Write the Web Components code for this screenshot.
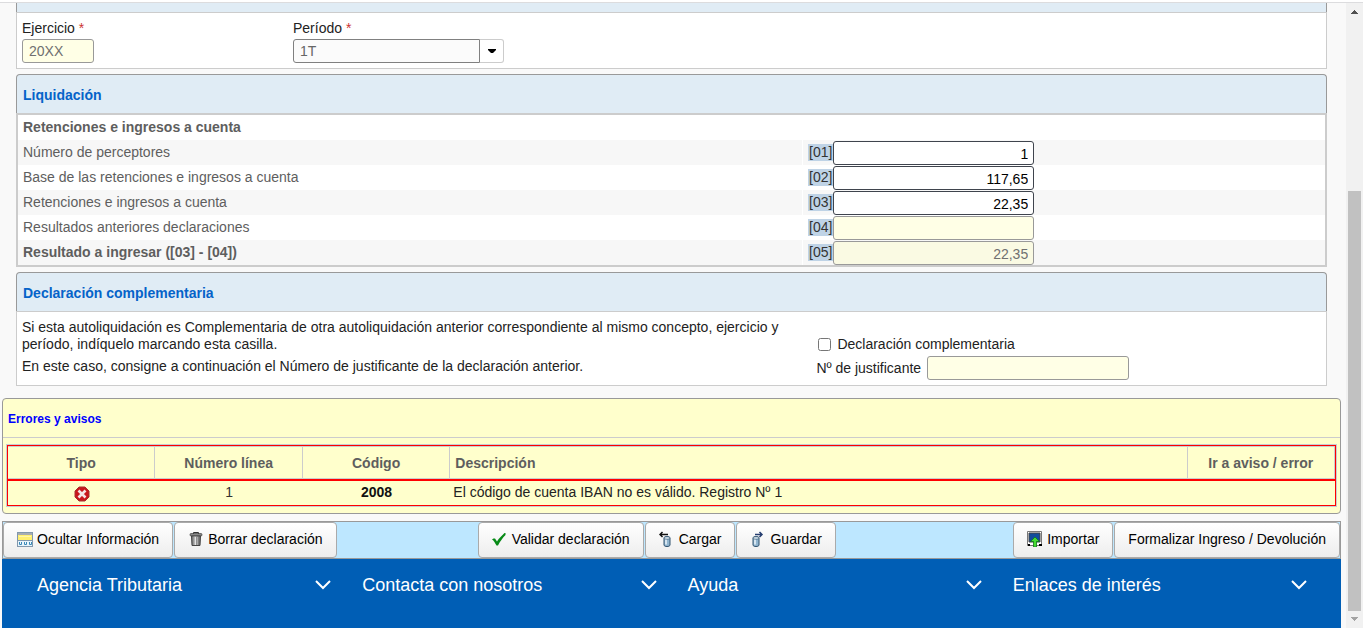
<!DOCTYPE html>
<html lang="es">
<head>
<meta charset="utf-8">
<title>Autoliquidación</title>
<style>
  body { margin: 0; font: 14px/17px "Liberation Sans", Arial, sans-serif; color: #222; }
</style>
</head>
<body>
<app-window></app-window>

<template id="tpl-app-window">
  <style>
    :host { display: flex; flex-direction: column; min-height: 100vh; box-sizing: border-box; padding-top: 2px; background: #fff; }
    .view { flex: 1; display: flex; border-top: 1px solid #dcdcde; }
    main { flex: 1; min-width: 0; display: flex; flex-direction: column; padding: 0 5px 0 2px; background: #f9f9f9; }
    .sections { display: flex; flex-direction: column; gap: 5px; padding: 0 14px; }
    .period { display: flex; gap: 199px; padding: 7px 5px 5px; }
    error-list { margin: 12px 0 7px; }
    site-footer { flex: 1; }
  </style>
  <div class="view">
    <main>
      <div class="sections">
        <form-panel clipped>
          <div class="period">
            <year-field></year-field>
            <period-field></period-field>
          </div>
        </form-panel>
        <form-panel heading="Liquidación" flush><settlement-table></settlement-table></form-panel>
        <form-panel heading="Declaración complementaria"><supplementary-form></supplementary-form></form-panel>
      </div>
      <error-list></error-list>
      <action-bar></action-bar>
      <site-footer></site-footer>
    </main>
    <scroll-rail></scroll-rail>
  </div>
</template>

<template id="tpl-form-panel">
  <style>
    :host { display: block; }
    header { box-sizing: border-box; height: 39px; padding: 12px 6px 0; border: 1px solid #999; border-bottom: 0; border-radius: 4px 4px 0 0; background: #e0ecf5; }
    h2 { margin: 0; font-size: 14px; line-height: 17px; color: #0563c9; }
    .body { border: 1px solid #ccc; background: #fff; }
    :host([clipped]) header { height: 9px; padding: 0; border-top: 0; border-radius: 0; }
    :host([flush]) .body { border-width: 2px; }
  </style>
  <header><h2></h2></header>
  <div class="body"><slot></slot></div>
</template>

<template id="tpl-year-field">
  <style>
    :host { display: block; }
    label { display: block; padding-bottom: 2px; }
    i { font-style: normal; color: #c33; }
    input { display: block; box-sizing: border-box; width: 72px; height: 24px; padding: 0 6px; border: 1px solid #999; border-radius: 3px; background: #ffffe6; color: #707070; font: inherit; }
  </style>
  <label for="year">Ejercicio <i>*</i></label>
  <input id="year" type="text" value="20XX" readonly>
</template>

<template id="tpl-period-field">
  <style>
    :host { display: block; }
    label { display: block; padding-bottom: 2px; }
    i { font-style: normal; color: #c33; }
    div { display: flex; }
    select { appearance: none; box-sizing: border-box; width: 187px; height: 24px; margin: 0; padding: 0 6px; border: 1px solid #808080; border-radius: 3px 0 0 3px; background: #fbfbfb; color: #666; font: inherit; }
    button { display: grid; place-items: center; box-sizing: border-box; width: 24px; height: 24px; padding: 0; border: 1px solid #ccc; border-left: 0; border-radius: 0 3px 3px 0; background: #fff; }
  </style>
  <label for="period">Período <i>*</i></label>
  <div>
    <select id="period"><option>1T</option></select>
    <button type="button" aria-label="Abrir"><svg width="8" height="5" viewBox="0 0 8 5"><path d="M0 0h8v1L5 4H3L0 1z" fill="#000"/></svg></button>
  </div>
</template>

<template id="tpl-settlement-table">
  <style>
    :host { display: block; color: #5e5e5e; }
    table { width: 100%; border-spacing: 0; table-layout: fixed; }
    .concept { width: 60%; }
    th, td { height: 25px; padding: 0 5px; text-align: left; font-weight: normal; }
    td { border-left: 1px solid #fff; }
    thead th, .total th { font-weight: bold; }
    tbody tr:nth-child(odd) { background: #f7f7f7; }
    td div { display: flex; align-items: center; }
    label { background: #bfd3e6; color: #333; width: 25px; text-align: center; }
    input { box-sizing: border-box; width: 201px; height: 24px; padding: 2px 5px 0; border: 1px solid #3f444d; border-radius: 3px; background: #fff; color: #000; font: inherit; text-align: right; }
    input:read-only { border-color: #999; background: #ffffe6; color: #707070; }
    .total input { background: #fafae3; }
  </style>
  <table>
    <colgroup><col class="concept"><col></colgroup>
    <thead><tr><th colspan="2">Retenciones e ingresos a cuenta</th></tr></thead>
    <tbody>
      <tr><th>Número de perceptores</th><td><div><label for="c1">[01]</label><input id="c1" value="1"></div></td></tr>
      <tr><th>Base de las retenciones e ingresos a cuenta</th><td><div><label for="c2">[02]</label><input id="c2" value="117,65"></div></td></tr>
      <tr><th>Retenciones e ingresos a cuenta</th><td><div><label for="c3">[03]</label><input id="c3" value="22,35"></div></td></tr>
      <tr><th>Resultados anteriores declaraciones</th><td><div><label for="c4">[04]</label><input id="c4" readonly></div></td></tr>
      <tr class="total"><th>Resultado a ingresar ([03] - [04])</th><td><div><label for="c5">[05]</label><input id="c5" value="22,35" readonly></div></td></tr>
    </tbody>
  </table>
</template>

<template id="tpl-supplementary-form">
  <style>
    :host { display: grid; grid-template-columns: 60% 1fr; padding: 7px 5px 5px; }
    p { margin: 0 0 5px; }
    .fields { padding: 17px 15px 0; }
    .line { display: flex; align-items: center; gap: 6px; }
    .line + .line { padding-top: 3px; }
    input[type=checkbox] { width: 13px; height: 13px; margin: 0 0 0 2px; }
    input[type=text] { box-sizing: border-box; width: 202px; height: 24px; border: 1px solid #999; border-radius: 3px; background: #ffffe6; font: inherit; }
  </style>
  <div>
    <p>Si esta autoliquidación es Complementaria de otra autoliquidación anterior correspondiente al mismo concepto, ejercicio y período, indíquelo marcando esta casilla.</p>
    <p>En este caso, consigne a continuación el Número de justificante de la declaración anterior.</p>
  </div>
  <div class="fields">
    <div class="line"><input id="extra" type="checkbox"><label for="extra">Declaración complementaria</label></div>
    <div class="line"><label for="receipt">Nº de justificante</label><input id="receipt" type="text" readonly></div>
  </div>
</template>

<template id="tpl-error-list">
  <style>
    :host { display: block; border: 1px solid #999; border-radius: 4px; background: #ffffcc; }
    h2 { margin: 0; padding: 12px 5px 9px; border-bottom: 1px solid #ccc; font-size: 12px; line-height: 17px; color: #00f; }
    .frame { margin: 6px 3px; border: 1px solid #c8ccd0; }
    table { width: 100%; border: 1px solid #f00; border-spacing: 0; table-layout: fixed; }
    th { box-sizing: border-box; width: calc(100% / 9); height: 33px; padding: 2px 5px 0; border: 1px solid #ccc; border-left: 0; color: #5e5e5e; }
    th:nth-child(4) { width: auto; text-align: left; }
    td { box-sizing: border-box; height: 26px; padding: 0 3px 2px; border-top: 2px solid #f00; text-align: center; }
    td:nth-child(3) { font-weight: bold; color: #111; }
    td:nth-child(4) { text-align: left; }
    td:nth-child(2) { color: #333; }
    svg { display: block; margin: 3px auto 0; }
  </style>
  <h2>Errores y avisos</h2>
  <div class="frame">
    <table>
      <thead><tr><th>Tipo</th><th>Número línea</th><th>Código</th><th>Descripción</th><th>Ir a aviso / error</th></tr></thead>
      <tbody><tr>
        <td><svg width="16" height="16" viewBox="0 0 16 16" role="img" aria-label="Error"><path d="M5 1h6l4 4v6l-4 4H5l-4-4V5z" fill="#c8171c" stroke="#a83030" stroke-width="1" stroke-linejoin="round"/><path d="M4.500 4.500l7 7M11.500 4.500l-7 7" stroke="#f4e6e6" stroke-width="2.600"/></svg></td>
        <td>1</td><td>2008</td><td>El código de cuenta IBAN no es válido. Registro Nº 1</td><td></td>
      </tr></tbody>
    </table>
  </div>
</template>

<template id="tpl-tool-button">
  <style>
    :host { display: block; }
    button { display: flex; align-items: center; gap: 4px; box-sizing: border-box; height: 36px; margin: 0; padding: 0 13px 2px; border: 1px solid #aaa; border-radius: 4px; background: linear-gradient(#fff, #ededed); color: #000; font: inherit; white-space: nowrap; }
    ::slotted(svg) { display: block; flex: none; }
  </style>
  <button type="button"><slot name="icon"></slot><slot></slot></button>
</template>

<template id="tpl-action-bar">
  <style>
    :host { display: grid; grid-template-columns: 71fr 80fr 49fr; border: 1px solid #999; background: #bde7ff; }
    div { display: flex; gap: 1px; }
    .end { justify-content: flex-end; }
  </style>
  <div>
    <tool-button><svg slot="icon" width="16" height="16" viewBox="0 0 16 16"><path d="M0 1h16v15H0z" fill="#8298ad"/><path d="M1 2h14v2H1z" fill="#a7adb2"/><path d="M1 4h14v5H1z" fill="#ffef70"/><path d="M2 5h12v1H2z" fill="#fff7a8"/><path d="M1 10h14v5H1z" fill="#e8f4fc"/><path d="M2.500 11v2.500h2V11M7.500 11v2.500h2V11M12.500 11v2.500h2V11" fill="none" stroke="#3b8ab8"/></svg>Ocultar Información</tool-button>
    <tool-button><svg slot="icon" width="16" height="16" viewBox="0 0 16 16"><defs><linearGradient id="metal"><stop stop-color="#555"/><stop offset=".4" stop-color="#eee"/><stop offset="1" stop-color="#555"/></linearGradient></defs><path d="M5.500 3V1.500h5V3" fill="none" stroke="#333"/><rect x="2" y="2.500" width="12" height="2.500" rx="1" fill="#888" stroke="#333" stroke-width=".6"/><path d="M3.500 5h9l-.5 9.500h-8z" fill="url(#metal)" stroke="#444"/><path d="M6 6v8M8.500 6v8M10.500 6v8" stroke="#777" stroke-width=".7"/></svg>Borrar declaración</tool-button>
  </div>
  <div>
    <tool-button><svg slot="icon" width="16" height="16" viewBox="0 0 16 16"><path d="M0 8.500L1.500 7.500H3L5 10.500C7 7 10 4.500 12.500 2H13.500V4C10.500 7 8 10.500 6 14.500H4.500C3 12 2 9.500 0 8.500z" fill="#078a17"/></svg>Validar declaración</tool-button>
    <tool-button><svg slot="icon" width="16" height="16" viewBox="0 0 16 16"><path d="M9 3.500H1M3.500 1L1 3.500 3.500 6" fill="none" stroke="#111" stroke-width="1.500"/><path d="M5 7c0-2 6-2 6 0v7c0 2-6 2-6 0z" fill="#91b5cf" stroke="#31526f"/><path d="M7 7.500v6" stroke="#eef6fb" stroke-width="1.500"/><ellipse cx="8" cy="7" rx="3" ry="1.300" fill="#d7e5ee" stroke="#31526f" stroke-width=".6"/></svg>Cargar</tool-button>
    <tool-button><svg slot="icon" width="16" height="16" viewBox="0 0 16 16"><path d="M5 3.500h7M9.500 1L12 3.500 9.500 6" fill="none" stroke="#263e70" stroke-width="1.500"/><path d="M3 7c0-2 6-2 6 0v7c0 2-6 2-6 0z" fill="#91b5cf" stroke="#31526f"/><path d="M5 7.500v6" stroke="#eef6fb" stroke-width="1.500"/><ellipse cx="6" cy="7" rx="3" ry="1.300" fill="#d7e5ee" stroke="#31526f" stroke-width=".6"/></svg>Guardar</tool-button>
  </div>
  <div class="end">
    <tool-button><svg slot="icon" width="16" height="16" viewBox="0 0 16 16"><path d="M.5.500h14v14H.5z" fill="#fff" stroke="#777"/><path d="M2 2h11v9H2z" fill="#124d9b" stroke="#444"/><path d="M1 14h2M12 14h3" stroke="#000" stroke-width="2"/><path d="M8 6l4.500 4.500h-3V16h-3v-5.500h-3z" fill="#45dc33" stroke="#12731d" stroke-width=".8"/></svg>Importar</tool-button>
    <tool-button>Formalizar Ingreso / Devolución</tool-button>
  </div>
</template>

<template id="tpl-site-footer">
  <style>
    :host { display: block; background: #005eb5; color: #fff; }
    nav { display: grid; grid-template-columns: repeat(4, 1fr); padding: 0 18px 0 20px; }
    a { display: flex; align-items: center; justify-content: space-between; padding: 15px; color: inherit; font-size: 18px; line-height: 22px; text-decoration: none; }
  </style>
  <nav></nav>
</template>

<template id="tpl-scroll-rail">
  <style>
    :host { display: flex; flex-direction: column; width: 17px; background: #f1f1f1; }
    svg { display: block; flex: none; }
    .track { flex: 1; display: flex; flex-direction: column; padding: 0 2px; }
    .above { flex: 171; }
    .thumb { flex: 420; background: #c1c1c1; }
  </style>
  <svg width="17" height="17" viewBox="0 0 17 17"><path d="M8 7h1v1h1v1h1v1h1v1H5v-1h1V9h1V8h1z" fill="#505050"/></svg>
  <div class="track"><div class="above"></div><div class="thumb"></div></div>
  <svg width="17" height="17" viewBox="0 0 17 17"><path d="M5 6h7v1h-1v1h-1v1H9v1H8V9H7V8H6V7H5z" fill="#a3a3a3"/></svg>
</template>

<script>
  class TemplateElement extends HTMLElement {
    constructor() {
      super();
      const template = document.getElementById('tpl-' + this.localName);
      this.attachShadow({ mode: 'open' }).append(template.content.cloneNode(true));
    }
  }

  class FormPanel extends TemplateElement {
    connectedCallback() {
      this.shadowRoot.querySelector('h2').textContent = this.getAttribute('heading') || '';
    }
  }

  class SiteFooter extends TemplateElement {
    connectedCallback() {
      const titles = ['Agencia Tributaria', 'Contacta con nosotros', 'Ayuda', 'Enlaces de interés'];
      this.shadowRoot.querySelector('nav').innerHTML = titles.map(title =>
        `<a href="#"><span>${title}</span><svg width="18" height="10" viewBox="0 0 18 10"><path d="M2 1l7 7 7-7" fill="none" stroke="#fff" stroke-width="2"/></svg></a>`
      ).join('');
    }
  }

  customElements.define('form-panel', FormPanel);
  customElements.define('site-footer', SiteFooter);
  for (const name of ['year-field', 'period-field', 'settlement-table', 'supplementary-form',
                      'error-list', 'tool-button', 'action-bar', 'scroll-rail', 'app-window']) {
    customElements.define(name, class extends TemplateElement {});
  }
</script>
</body>
</html>
